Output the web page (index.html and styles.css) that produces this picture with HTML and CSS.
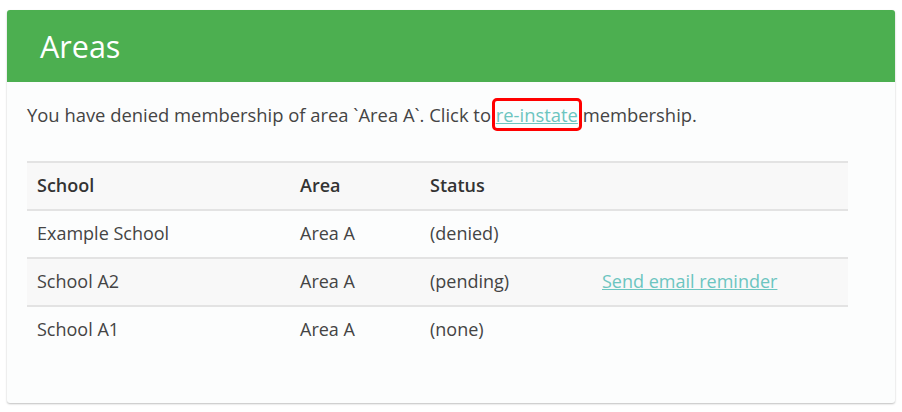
FILE: index.html
```html
<!DOCTYPE html>
<html>
<head>
<meta charset="utf-8">
<link rel="stylesheet" href="styles.css">
</head>
<body>
<div class="card">
  <div class="card-header"><h1 class="title">Areas</h1></div>
  <div class="card-body">
    <p class="notice">You have denied membership of area `Area A`. Click to <a href="#" class="link marked">re-instate</a> membership.</p>
    <table class="table">
      <thead>
        <tr><th class="c-school">School</th><th class="c-area">Area</th><th class="c-status">Status</th><th></th></tr>
      </thead>
      <tbody>
        <tr><td>Example School</td><td>Area A</td><td>(denied)</td><td></td></tr>
        <tr class="alt"><td>School A2</td><td>Area A</td><td>(pending)</td><td><a href="#" class="link">Send email reminder</a></td></tr>
        <tr><td>School A1</td><td>Area A</td><td>(none)</td><td></td></tr>
      </tbody>
    </table>
  </div>
</div>
</body>
</html>
```
FILE: styles.css
```css
html, body {
  margin: 0;
  padding: 0;
  background: #ffffff;
}
body {
  font-family: "Open Sans", "Liberation Sans", sans-serif;
  color: #444;
  padding: 10px 7px 6px 7px;
}
.card {
  background: #fcfdfd;
  border-radius: 3px;
  box-shadow: 0 1px 2px rgba(0,0,0,0.25);
  overflow: hidden;
}
.card-header {
  background: #4caf50;
  height: 72px;
  display: flex;
  align-items: center;
  padding: 0 33px;
}
.title {
  margin: 0;
  color: #fff;
  font-size: 30.5px;
  font-weight: 400;
  line-height: 36px;
}
.card-body {
  padding: 21px 47px 50px 20px;
}
.notice {
  margin: 0 0 34px 0;
  font-size: 18.4px;
  line-height: 24px;
  color: #444;
}
.link {
  color: #6cc5c0;
  text-decoration: underline;
}
.marked {
  outline: 3px solid #ff0000;
  outline-offset: 1px;
  border-radius: 1px;
}
.table {
  width: 100%;
  border-collapse: collapse;
  font-size: 18px;
}
.table th, .table td {
  text-align: left;
  padding: 10px 10px 12px 10px;
  line-height: 24px;
  border-top: 2px solid #e3e3e3;
}
.table th {
  font-weight: 600;
  color: #333;
  background: #f8f8f8;
  border-bottom: 2px solid #e3e3e3;
}
.table td {
  color: #444;
}
.table tbody tr:last-child td {
  border-bottom: 0;
}
.table tr.alt td {
  background: #f8f8f8;
  border-bottom: 2px solid #e3e3e3;
}
.c-school { width: 243px; }
.c-area { width: 110px; }
.c-status { width: 152px; }
```
